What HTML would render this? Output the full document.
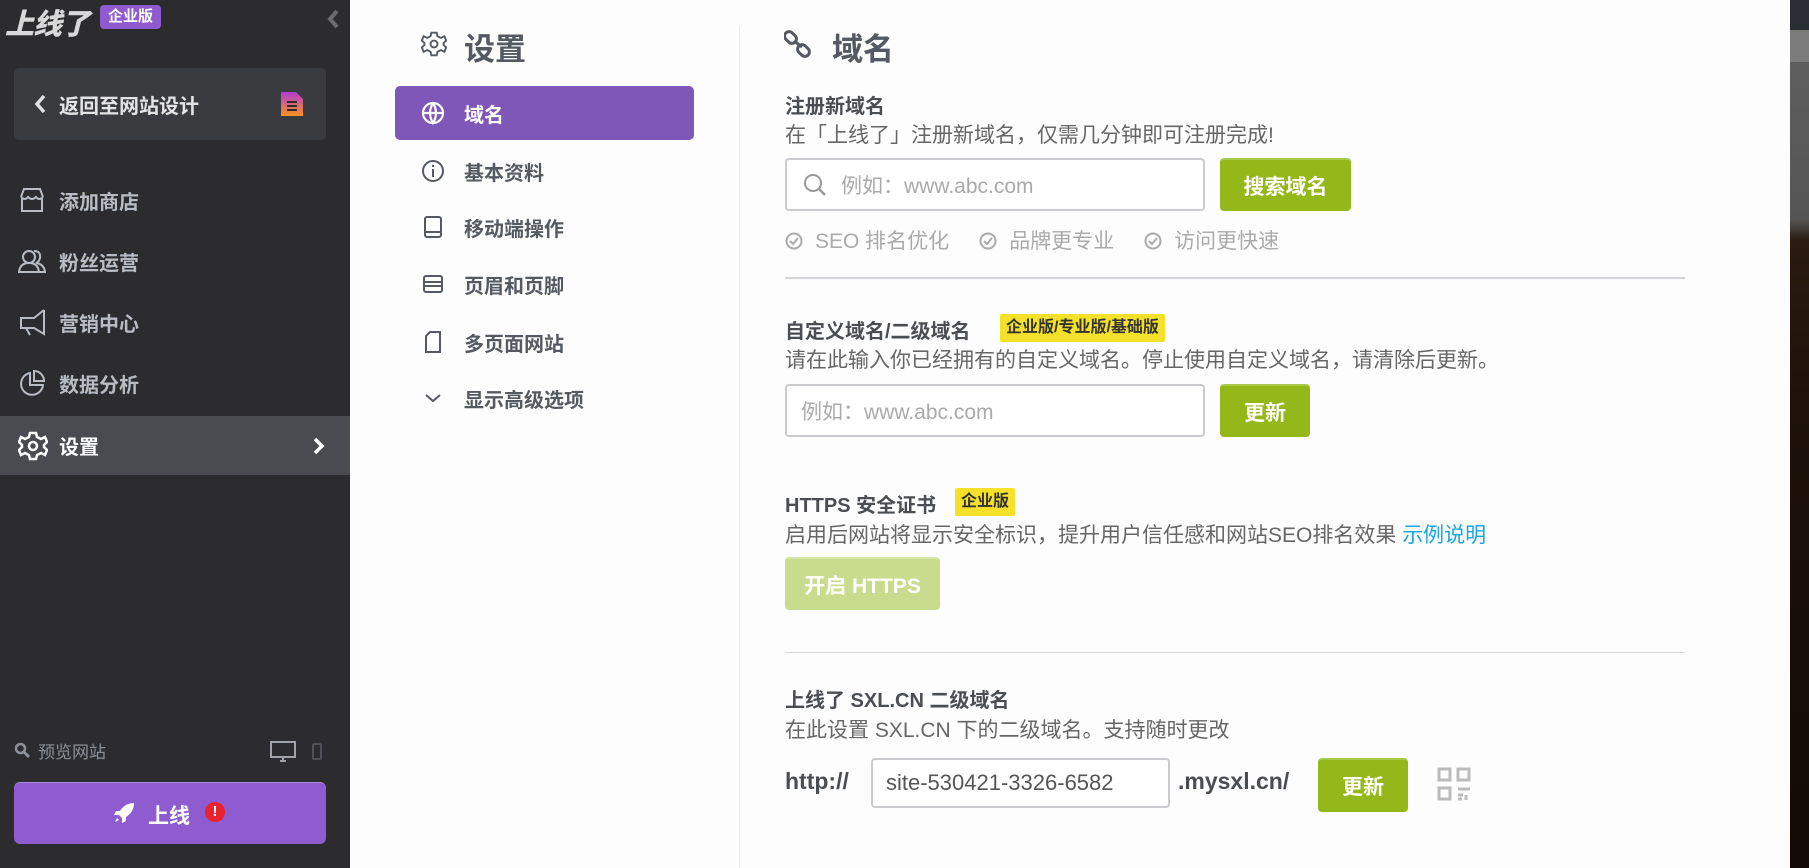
<!DOCTYPE html>
<html><head><meta charset="utf-8"><style>
*{margin:0;padding:0;box-sizing:border-box}
body{width:1809px;height:868px;overflow:hidden;background:#fdfdfd;font-family:"Liberation Sans","Noto Sans CJK SC",sans-serif;position:relative}
.a{position:absolute}
.sb{left:0;top:0;width:350px;height:868px;background:#2c2c2e}
.mi{position:absolute;left:0;width:350px;height:60px;display:flex;align-items:center;color:#b8bcc4;font-size:20px;font-weight:bold}
.mi svg{position:absolute;left:18px}
.mi span{position:absolute;left:59px}
.nv{position:absolute;left:395px;width:299px;height:54px;display:flex;align-items:center;color:#555a62;font-size:20px;font-weight:bold}
.nv svg{position:absolute;left:26px}
.nv span{position:absolute;left:69px}
.t{position:absolute;left:785px;font-size:21px;color:#666;white-space:nowrap}
.b{font-weight:bold;color:#4a4d52;font-size:20px}
.inp{position:absolute;border:2px solid #c9cbce;border-radius:4px;background:#fff;font-size:21px;color:#aaa;display:flex;align-items:center}
.btn{position:absolute;background:#94b81a;border-radius:4px;color:#fff;font-size:21px;font-weight:bold;display:flex;align-items:center;justify-content:center;border-top:2px solid #a9c94a}
.bd{position:absolute;background:#f5e12a;color:#333;font-size:16px;font-weight:bold;padding:0 6px;height:28px;line-height:28px;border-radius:2px}
.ck{display:inline-block;vertical-align:-2px}
</style></head><body>
<div class="a sb"></div>
<div class="a" style="left:5px;top:1px;font-size:29px;font-weight:900;font-style:italic;color:#d8d8d8;letter-spacing:-1px">上线了</div>
<div class="a" style="left:100px;top:5px;width:61px;height:24px;background:#8e5bd0;border-radius:4px;color:#fff;font-size:15px;font-weight:bold;text-align:center;line-height:24px">企业版</div>
<svg class="a" style="left:326px;top:9px" width="14" height="20" viewBox="0 0 14 20"><path d="M11 2 L4 10 L11 18" stroke="#6a6c70" stroke-width="4" fill="none"/></svg>
<div class="a" style="left:14px;top:68px;width:312px;height:72px;background:#3a3b3f;border-radius:5px"></div>
<svg class="a" style="left:33px;top:94px" width="14" height="20"><path d="M11 2 L4 10 L11 18" stroke="#e0e0e0" stroke-width="3.5" fill="none"/></svg>
<div class="a" style="left:59px;top:90px;font-size:20px;font-weight:bold;color:#e4e4e4">返回至网站设计</div>
<svg class="a" style="left:281px;top:92px" width="22" height="24"><defs><linearGradient id="g" x1="0" y1="0" x2="0" y2="1"><stop offset="0" stop-color="#b23ad8"/><stop offset="1" stop-color="#f7931e"/></linearGradient></defs><path d="M0 0H15L22 7V24H0Z" fill="url(#g)"/><path d="M6 10H16M6 14H16M6 18H16" stroke="#2c2c2e" stroke-width="2"/></svg>
<div class="mi" style="top:170px"><svg width="28" height="26" viewBox="0 0 28 26" fill="none" stroke="#b8bcc4" stroke-width="2"><path d="M3 10 L6 2H22L25 10M3 10Q7 14 10 10Q14 14 18 10Q21 14 25 10M4 12V24H24V12M3 24H25"/></svg><span>添加商店</span></div>
<div class="mi" style="top:231px"><svg width="28" height="26" viewBox="0 0 28 26" fill="none" stroke="#b8bcc4" stroke-width="2"><circle cx="11" cy="9" r="6"/><path d="M1 24Q2 15 11 15Q20 15 21 24ZM16 3Q23 3 22 10Q21 14 18 15Q26 16 27 24H21"/></svg><span>粉丝运营</span></div>
<div class="mi" style="top:292px"><svg width="28" height="28" viewBox="0 0 28 28" fill="none" stroke="#b8bcc4" stroke-width="2"><path d="M26 2V26L16 20H3V10H16L26 2M8 20L12 27"/></svg><span>营销中心</span></div>
<div class="mi" style="top:353px"><svg width="28" height="28" viewBox="0 0 28 28" fill="none" stroke="#b8bcc4" stroke-width="2"><path d="M12 4A11 11 0 1 0 25 16H12Z"/><path d="M16 2A10 10 0 0 1 26 12H16Z"/></svg><span>数据分析</span></div>
<div class="mi" style="top:416px;height:59px;background:#4a4b50;color:#fff"><svg width="30" height="30" viewBox="0 0 30 30" fill="none" stroke="#fff" stroke-width="2.5"><path d="M12 2H18L19 6L23 8L27 6L29 11L26 14V16L29 19L27 24L23 22L19 24L18 28H12L11 24L7 22L3 24L1 19L4 16V14L1 11L3 6L7 8L11 6Z"/><circle cx="15" cy="15" r="4"/></svg><span>设置</span><svg style="left:313px" width="12" height="18"><path d="M2 2L9 9L2 16" stroke="#fff" stroke-width="3.5" fill="none"/></svg></div>
<svg class="a" style="left:14px;top:742px" width="16" height="16"><circle cx="6.5" cy="6.5" r="4.5" stroke="#8a9099" stroke-width="2.5" fill="none"/><path d="M10 10L15 15" stroke="#8a9099" stroke-width="3"/></svg>
<div class="a" style="left:38px;top:738px;font-size:17px;color:#8a9099">预览网站</div>
<svg class="a" style="left:270px;top:741px" width="26" height="22"><rect x="1" y="1" width="24" height="15" stroke="#a0a4aa" stroke-width="2" fill="none"/><path d="M10 20H16M13 16V20" stroke="#a0a4aa" stroke-width="2"/></svg>
<div class="a" style="left:312px;top:743px;width:10px;height:17px;border:2px solid #4e5258;border-radius:2px"></div>
<div class="a" style="left:14px;top:782px;width:312px;height:62px;background:#8e5bd0;border-radius:6px;border-top:1px solid #a98ae0"></div>
<svg class="a" style="left:113px;top:802px" width="22" height="22" viewBox="0 0 22 22"><path d="M21 1Q12 1 7 9L3 9L1 13L6 13L9 16L9 21L13 19L13 15Q21 10 21 1Z M4 16L2 20L6 18Z" fill="#fff"/></svg>
<div class="a" style="left:148px;top:800px;font-size:21px;font-weight:bold;color:#fff">上线</div>
<div class="a" style="left:205px;top:802px;width:20px;height:20px;border-radius:50%;background:#e8222e;color:#fff;font-weight:bold;font-size:15px;text-align:center;line-height:20px">!</div>

<svg class="a" style="left:421px;top:31px" width="26" height="26" viewBox="0 0 30 30" fill="none" stroke="#555a62" stroke-width="2.2"><path d="M12 2H18L19 6L23 8L27 6L29 11L26 14V16L29 19L27 24L23 22L19 24L18 28H12L11 24L7 22L3 24L1 19L4 16V14L1 11L3 6L7 8L11 6Z"/><circle cx="15" cy="15" r="4"/></svg>
<div class="a" style="left:464px;top:24px;font-size:31px;font-weight:bold;color:#555a62">设置</div>
<div class="a" style="left:739px;top:27px;width:1px;height:841px;background:#ececec"></div>
<div class="nv" style="top:86px;background:#7e57b8;border-radius:5px;color:#fff"><svg width="24" height="24" viewBox="0 0 24 24" fill="none" stroke="#fff" stroke-width="2.2"><circle cx="12" cy="12" r="10"/><path d="M2 12H22M12 2Q6 12 12 22Q18 12 12 2"/></svg><span>域名</span></div>
<div class="nv" style="top:144px"><svg width="24" height="24" viewBox="0 0 24 24" fill="none" stroke="#555a62" stroke-width="2"><circle cx="12" cy="12" r="10"/><path d="M12 10V18M12 6V8"/></svg><span>基本资料</span></div>
<div class="nv" style="top:200px"><svg width="24" height="24" viewBox="0 0 24 24" fill="none" stroke="#555a62" stroke-width="2"><rect x="4" y="2" width="16" height="20" rx="2"/><path d="M4 17H20"/></svg><span>移动端操作</span></div>
<div class="nv" style="top:257px"><svg width="24" height="24" viewBox="0 0 24 24" fill="none" stroke="#555a62" stroke-width="2"><rect x="3" y="4" width="18" height="16" rx="2"/><path d="M3 10H21M3 14H21"/></svg><span>页眉和页脚</span></div>
<div class="nv" style="top:315px"><svg width="24" height="24" viewBox="0 0 24 24" fill="none" stroke="#555a62" stroke-width="2"><path d="M9 2H19V22H5V6Z"/></svg><span>多页面网站</span></div>
<div class="nv" style="top:371px"><svg width="24" height="24" viewBox="0 0 24 24" fill="none" stroke="#555a62" stroke-width="2"><path d="M5 9L12 15L19 9"/></svg><span>显示高级选项</span></div>

<svg class="a" style="left:784px;top:28px" width="28" height="32" viewBox="0 0 28 32" fill="none" stroke="#555a62" stroke-width="3"><rect x="2" y="3" width="9" height="13" rx="4.5" transform="rotate(-45 6.5 9.5)"/><rect x="15" y="16" width="9" height="13" rx="4.5" transform="rotate(-45 19.5 22.5)"/><path d="M10 13L18 19"/></svg>
<div class="a" style="left:832px;top:24px;font-size:31px;font-weight:bold;color:#555a62">域名</div>
<div class="t b" style="top:90px">注册新域名</div>
<div class="t" style="top:119px">在「上线了」注册新域名，仅需几分钟即可注册完成!</div>
<div class="inp" style="left:785px;top:158px;width:420px;height:53px"><svg style="margin-left:16px" width="24" height="24"><circle cx="10" cy="10" r="8" stroke="#999" stroke-width="2" fill="none"/><path d="M16 16L22 22" stroke="#999" stroke-width="2.5"/></svg><span style="margin-left:14px">例如：www.abc.com</span></div>
<div class="btn" style="left:1220px;top:158px;width:131px;height:53px">搜索域名</div>
<div class="t" style="top:225px;color:#aaa;font-size:21px">
<svg class="ck" width="18" height="18" style="margin-right:12px"><circle cx="9" cy="9" r="7.5" stroke="#aaa" stroke-width="2" fill="none"/><path d="M5 9L8 12L13 6" stroke="#aaa" stroke-width="2" fill="none"/></svg>SEO 排名优化<svg class="ck" width="18" height="18" style="margin:0 12px 0 30px"><circle cx="9" cy="9" r="7.5" stroke="#aaa" stroke-width="2" fill="none"/><path d="M5 9L8 12L13 6" stroke="#aaa" stroke-width="2" fill="none"/></svg>品牌更专业<svg class="ck" width="18" height="18" style="margin:0 12px 0 30px"><circle cx="9" cy="9" r="7.5" stroke="#aaa" stroke-width="2" fill="none"/><path d="M5 9L8 12L13 6" stroke="#aaa" stroke-width="2" fill="none"/></svg>访问更快速</div>
<div class="a" style="left:785px;top:277px;width:900px;height:2px;background:#d3d5d8"></div>
<div class="t b" style="top:315px">自定义域名/二级域名</div>
<div class="bd" style="left:1000px;top:314px">企业版/专业版/基础版</div>
<div class="t" style="top:344px">请在此输入你已经拥有的自定义域名。停止使用自定义域名，请清除后更新。</div>
<div class="inp" style="left:785px;top:384px;width:420px;height:53px"><span style="margin-left:14px">例如：www.abc.com</span></div>
<div class="btn" style="left:1220px;top:384px;width:90px;height:53px">更新</div>
<div class="t b" style="top:489px">HTTPS 安全证书</div>
<div class="bd" style="left:955px;top:488px">企业版</div>
<div class="t" style="top:519px">启用后网站将显示安全标识，提升用户信任感和网站SEO排名效果 <span style="color:#1aa6e0">示例说明</span></div>
<div class="btn" style="left:785px;top:557px;width:155px;height:53px;background:#c9dc8e;border-top-color:#d6e6a6">开启 HTTPS</div>
<div class="a" style="left:785px;top:652px;width:900px;height:1px;background:#d8d8d8"></div>
<div class="t b" style="top:684px">上线了 SXL.CN 二级域名</div>
<div class="t" style="top:714px">在此设置 SXL.CN 下的二级域名。支持随时更改</div>
<div class="t b" style="top:768px;font-size:23px">http://</div>
<div class="inp" style="left:871px;top:758px;width:299px;height:50px;color:#555"><span style="margin-left:13px;font-size:22px">site-530421-3326-6582</span></div>
<div class="t b" style="left:1178px;top:768px;font-size:23px">.mysxl.cn/</div>
<div class="btn" style="left:1318px;top:758px;width:90px;height:54px">更新</div>
<svg class="a" style="left:1437px;top:767px" width="35" height="34" viewBox="0 0 35 34" fill="none" stroke="#bbb" stroke-width="3"><rect x="2" y="2" width="11" height="11"/><rect x="21" y="2" width="11" height="11"/><rect x="2" y="21" width="11" height="11"/><path d="M21 22H33M21 28H26M29 28V33M21 32H25"/></svg>
<div class="a" style="left:1790px;top:0;width:19px;height:868px;background:linear-gradient(#2a2d33 0,#2a2d33 30px,#7b7b7b 30px,#7b7b7b 62px,#5e5e5e 62px,#555 220px,#2a1a10 240px,#1e120a 400px,#120a06 868px)"></div>
</body></html>
